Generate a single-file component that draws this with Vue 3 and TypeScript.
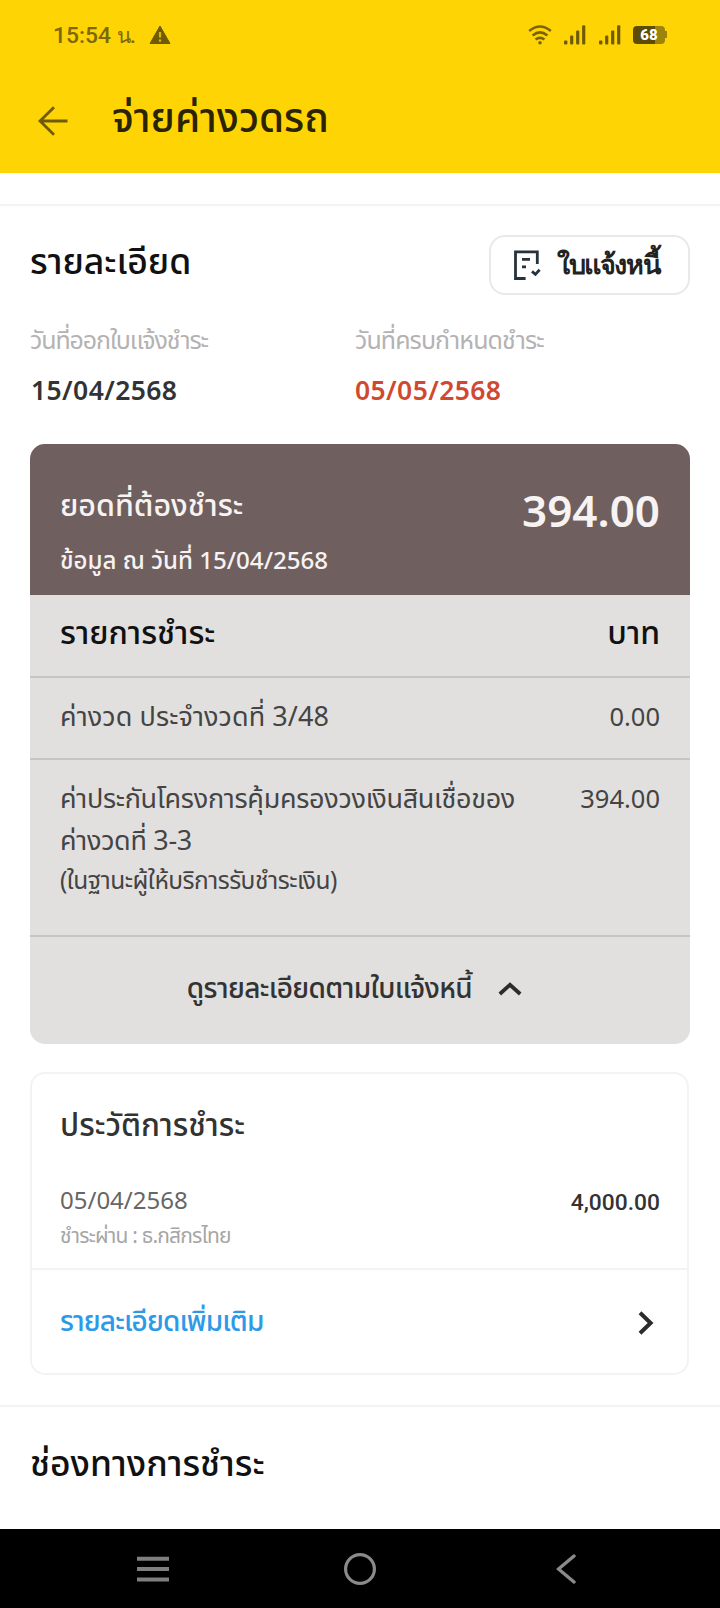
<script setup lang="ts">
interface BillRow {
  lines: string[]
  note?: string
  amount: string
}

const rows: BillRow[] = [
  { lines: ['ค่างวด ประจำงวดที่ 3/48'], amount: '0.00' },
  {
    lines: ['ค่าประกันโครงการคุ้มครองวงเงินสินเชื่อของ', 'ค่างวดที่ 3-3'],
    note: '(ในฐานะผู้ให้บริการรับชำระเงิน)',
    amount: '394.00',
  },
]
const signalSlots = [1, 2]
</script>

<template>
  <div class="screen">
    <header class="top">
      <div class="status">
        <span class="clock">15:54 <small>น.</small></span>
        <svg class="warn" viewBox="0 0 22 20" width="22" height="20">
          <path d="M11 1 21 18.5H1Z" fill="#6f5b05" stroke="#6f5b05" stroke-linejoin="round" />
          <path d="M11 7v5.5M11 14.5v2.2" stroke="#d9b608" stroke-width="2.2" />
        </svg>
        <div class="status-icons">
          <svg class="wifi" viewBox="0 0 24 20" width="24" height="20" fill="none" stroke="#78630a" stroke-width="2.6">
            <path d="M1.2 6Q12-3 22.8 6M4.6 10.4Q12 4.4 19.4 10.4M7.6 14.6Q12 11 16.4 14.6" />
            <circle cx="12" cy="17.8" r="1.8" fill="#78630a" stroke="none" />
          </svg>
          <svg v-for="s in signalSlots" :key="s" class="signal" viewBox="0 0 22 20" width="22" height="20" fill="#6f5b05">
            <rect x="0" y="15.5" width="3.4" height="4" rx="1" />
            <rect x="6.1" y="10.6" width="3.2" height="8.9" rx="1" />
            <rect x="12.1" y="5.4" width="3.2" height="14.1" rx="1" />
            <rect x="18.1" y="0.2" width="3.2" height="19.3" rx="1" />
          </svg>
          <div class="battery"><span>68</span><i></i></div>
        </div>
      </div>
      <div class="titlebar">
        <svg viewBox="0 0 32 32" width="32" height="32" fill="none" stroke="#6f5b05" stroke-width="2.8">
          <path d="M30.5 16H3M17 2.2 3 16l14 13.8" />
        </svg>
        <h1>จ่ายค่างวดรถ</h1>
      </div>
    </header>

    <section class="detail">
      <div class="detail-head">
        <h2>รายละเอียด</h2>
        <button class="invoice">
          <svg viewBox="0 0 28 30" width="28" height="30" fill="none" stroke="#26323c" stroke-width="2.8">
            <path d="M12.6 28.5H2.5V1.8h21.8V14" />
            <path d="M9 9.3h8M9 16.9h4" />
            <path d="m19 21.4 3.4 3 4.2-4.6" />
          </svg>
          <span>ใบแจ้งหนี้</span>
        </button>
      </div>
      <div class="dates">
        <div>
          <p class="label issue">วันที่ออกใบแจ้งชำระ</p>
          <p class="date first">15/04/2568</p>
        </div>
        <div>
          <p class="label due">วันที่ครบกำหนดชำระ</p>
          <p class="date red">05/05/2568</p>
        </div>
      </div>

      <div class="bill">
        <div class="bill-head">
          <div>
            <p class="bill-title">ยอดที่ต้องชำระ</p>
            <p class="bill-sub">ข้อมูล ณ วันที่ 15/04/2568</p>
          </div>
          <strong>394.00</strong>
        </div>
        <div class="bill-cols"><span>รายการชำระ</span><span>บาท</span></div>
        <div v-for="row in rows" :key="row.amount" class="bill-row">
          <div>
            <p v-for="line in row.lines" :key="line">{{ line }}</p>
            <p v-if="row.note" class="note">{{ row.note }}</p>
          </div>
          <span class="amount">{{ row.amount }}</span>
        </div>
        <div class="bill-toggle">
          <span>ดูรายละเอียดตามใบแจ้งหนี้</span>
          <svg viewBox="0 0 24 14" width="24" height="14" fill="none" stroke="#2c2c2c" stroke-width="3.8">
            <path d="M1.8 12 12 2.8l10.2 9.2" />
          </svg>
        </div>
      </div>

      <div class="history">
        <h3>ประวัติการชำระ</h3>
        <div class="payment">
          <div>
            <p class="pay-date">05/04/2568</p>
            <p class="pay-via">ชำระผ่าน : ธ.กสิกรไทย</p>
          </div>
          <b>4,000.00</b>
        </div>
        <div class="more">
          <a>รายละเอียดเพิ่มเติม</a>
          <svg viewBox="0 0 16 24" width="16" height="24" fill="none" stroke="#2c2c2c" stroke-width="4">
            <path d="m2 1.8 10.6 10.2L2 22.2" />
          </svg>
        </div>
      </div>
    </section>

    <section class="channels"><h2>ช่องทางการชำระ</h2></section>

    <nav>
      <svg viewBox="0 0 34 28" width="34" height="28" stroke="#7f7f7f" stroke-width="4">
        <path d="M1 3.7h32M1 14h32M1 24.6h32" />
      </svg>
      <svg viewBox="0 0 34 34" width="34" height="34" fill="none" stroke="#8a8a8a" stroke-width="3.2">
        <circle cx="17" cy="17" r="14.4" />
      </svg>
      <svg viewBox="0 0 20 30" width="20" height="30" fill="none" stroke="#8a8a8a" stroke-width="3.4" stroke-linecap="round">
        <path d="M18 2 2.5 15 18 28" />
      </svg>
    </nav>
  </div>
</template>

<style>
body { margin: 0; background: #fff; }
</style>

<style scoped>
* { box-sizing: border-box; margin: 0; padding: 0; }
svg { display: block; flex: none; }
.screen { width: 720px; height: 1608px; display: flex; flex-direction: column; overflow: hidden; background: #fff; color: #333; font-family: "Noto Sans", "Noto Sans Thai", sans-serif; white-space: nowrap; }
.top { height: 173px; background: #fed405; flex: none; }
.status { height: 68px; display: flex; align-items: center; padding: 1px 53px 0 53px; color: #7c670a; }
.clock { font: 500 22.8px/30px Roboto, sans-serif; width: 96px; padding-top: 2px; }
.clock small { font-size: 21px; letter-spacing: -0.5px; }
.status-icons { display: flex; margin-left: auto; align-items: center; }
.signal { margin-left: 13px; }
.wifi { margin-right: -1px; }
.battery { margin-left: 12px; width: 34px; height: 18px; display: flex; align-items: center; }
.battery span { width: 32px; height: 18px; border-radius: 4px; background: linear-gradient(90deg, #5d4c06 68%, #9c8309 68%); color: #fff; font: 900 15px/18px Roboto, sans-serif; text-align: center; }
.battery i { width: 2px; height: 7px; background: #9c8309; }
.titlebar { height: 105px; display: flex; align-items: center; padding: 0 0 0 37px; gap: 43px; }
h1 { font-size: 40.4px; line-height: 60px; font-weight: 500; color: #2b2404; padding-bottom: 8px; }
.detail { border-top: 2px solid #f3f3f3; margin-top: 31px; padding: 29px 30px 0; height: 1201px; flex: none; }
.detail-head { height: 60px; display: flex; justify-content: space-between; }
h2 { font-size: 35.5px; line-height: 50px; font-weight: 500; color: #111; }
.invoice { width: 201px; height: 60px; border: 2px solid #e9e9e9; border-radius: 16px; background: #fff; display: flex; align-items: center; padding: 0 0 0 22px; gap: 16px; font: 600 27px/50px "Noto Sans", sans-serif; letter-spacing: -1.4px; color: #222; }
.invoice span { margin-top: -3px; }
.dates { display: grid; grid-template-columns: 325px 1fr; padding-top: 24px; height: 149px; }
.label { font-size: 25px; line-height: 40px; color: #b4b2b2; }
.issue { letter-spacing: -1.1px; }
.due { letter-spacing: -0.9px; }
.date { font-size: 26.5px; line-height: 40px; margin-top: 11px; font-weight: 600; letter-spacing: 0.4px; }
.first { padding-left: 1px; }
.red { color: #d0492f; }
.bill { height: 600px; border-radius: 15px; overflow: hidden; background: #e1e0df; }
.bill-head { height: 151px; background: #6f5f5f; color: #f7f3f2; display: flex; justify-content: space-between; padding: 36px 30px 0; }
.bill-title { font-size: 30.5px; line-height: 48px; font-weight: 500; }
.bill-sub { font-size: 24.1px; line-height: 40px; font-weight: 500; margin-top: 12px; }
.bill-head strong { font-size: 44px; line-height: 60px; font-weight: 600; }
.bill-cols { height: 83px; border-bottom: 2px solid #c6c5c4; padding: 12px 30px 0; display: flex; justify-content: space-between; font-size: 32px; line-height: 50px; font-weight: 500; color: #111; }
.bill-row { display: flex; justify-content: space-between; padding: 17px 30px 0; height: 82px; border-bottom: 2px solid #c6c5c4; font-size: 27px; line-height: 42px; color: #444; letter-spacing: 0.1px; }
.bill-row + .bill-row { height: 177px; letter-spacing: -0.3px; }
.note { font-size: 24.5px; line-height: 38px; letter-spacing: -0.5px; }
.amount { font-size: 25.5px; letter-spacing: 0; }
.bill-toggle { height: 107px; display: flex; justify-content: center; align-items: center; gap: 26px; padding-right: 11px; font-size: 28px; line-height: 46px; font-weight: 500; letter-spacing: -0.6px; color: #333; }
.bill-toggle span { margin-top: -8px; }
.bill-toggle svg { margin-top: -4px; }
.history { margin: 28px 1px 0 0; height: 303px; border: 2px solid #f3f3f3; border-radius: 15px; }
h3 { font-size: 31.2px; line-height: 50px; font-weight: 500; padding: 25px 28px 0; height: 76px; }
.payment { display: flex; justify-content: space-between; height: 120px; border-bottom: 2px solid #f3f3f3; padding: 30px 27px 0 28px; }
.pay-date { font-size: 24px; line-height: 40px; color: #666; }
.pay-via { font-size: 21px; line-height: 30px; letter-spacing: -0.8px; color: #a6a6a6; }
.payment b { font: 500 22.8px/46px Roboto, sans-serif; }
.more { height: 105px; display: flex; justify-content: space-between; align-items: center; padding: 0 33px 0 28px; font-size: 28px; font-weight: 500; letter-spacing: -0.85px; color: #2d9ae8; }
.more a { margin-top: -1px; }
.channels { border-top: 2px solid #f3f3f3; flex: 1; padding: 30px; }
nav { height: 79px; background: #000; display: grid; grid-template-columns: 34px 34px 20px; column-gap: 173px; align-items: center; padding-left: 136px; flex: none; }
nav svg:last-child { margin-left: 6px; }
</style>
